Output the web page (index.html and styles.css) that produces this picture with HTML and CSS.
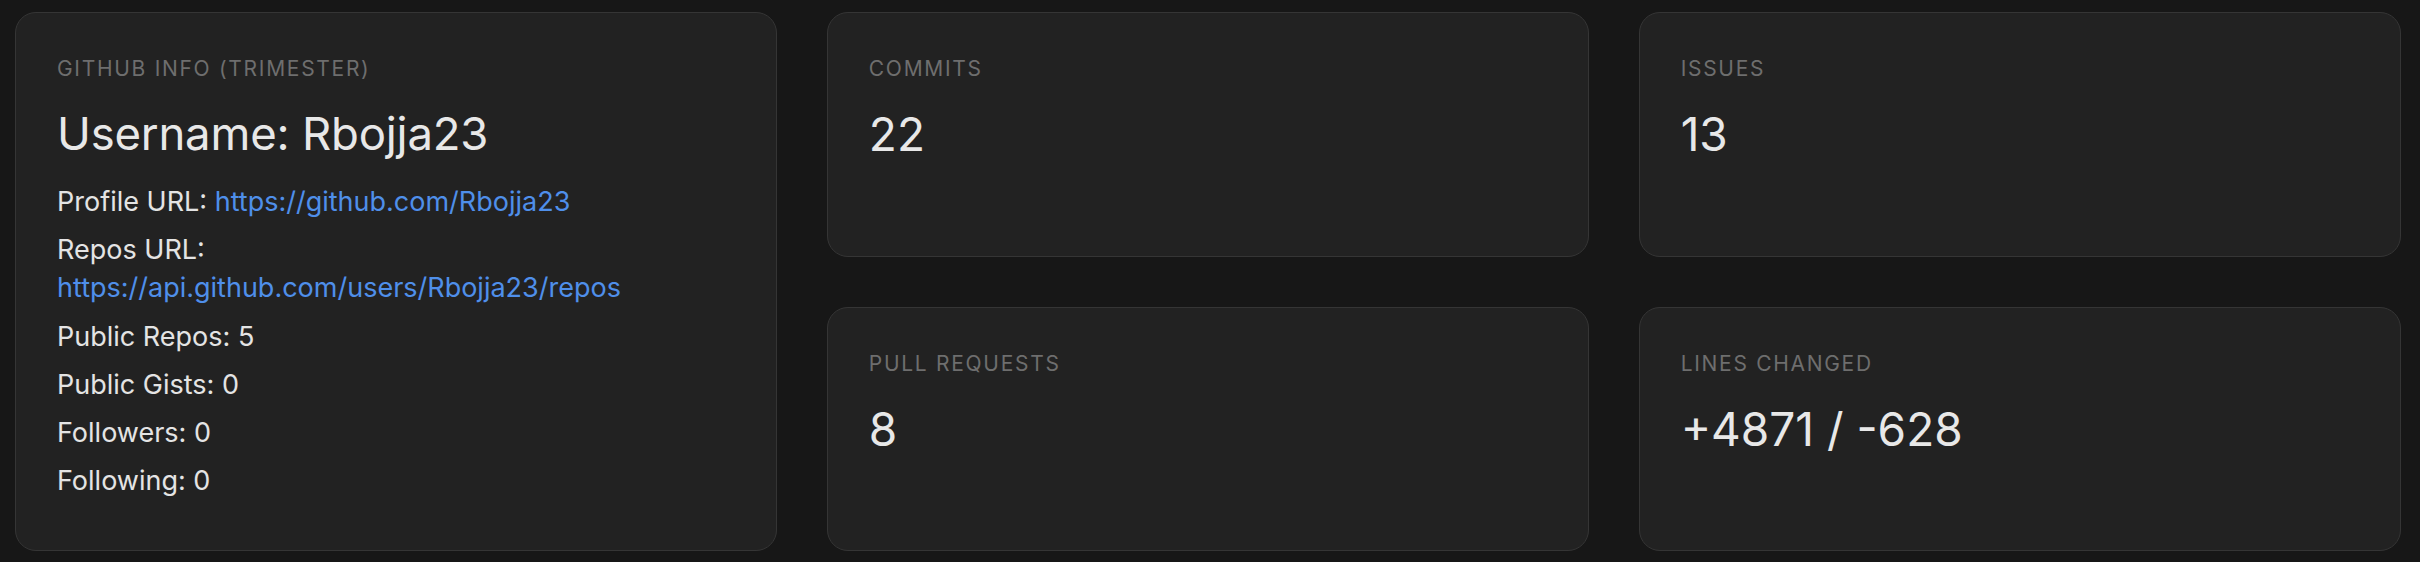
FILE: index.html
```html
<!DOCTYPE html>
<html lang="en">
<head>
<meta charset="utf-8">
<title>GitHub Stats</title>
<link rel="stylesheet" href="styles.css">
</head>
<body>
<main class="dashboard">
  <section class="card card-info">
    <div class="card-label">GitHub Info (Trimester)</div>
    <h2 class="username">Username: Rbojja23</h2>
    <p class="info-line">Profile URL: <a class="link" href="#">https://github.com/Rbojja23</a></p>
    <p class="info-line">Repos URL:<br><a class="link" href="#">https://api.github.com/users/Rbojja23/repos</a></p>
    <p class="info-line">Public Repos: 5</p>
    <p class="info-line">Public Gists: 0</p>
    <p class="info-line">Followers: 0</p>
    <p class="info-line">Following: 0</p>
  </section>
  <section class="card">
    <div class="card-label">Commits</div>
    <div class="card-value">22</div>
  </section>
  <section class="card">
    <div class="card-label">Issues</div>
    <div class="card-value">13</div>
  </section>
  <section class="card">
    <div class="card-label">Pull Requests</div>
    <div class="card-value">8</div>
  </section>
  <section class="card">
    <div class="card-label">Lines Changed</div>
    <div class="card-value">+4871 / -628</div>
  </section>
</main>
</body>
</html>
```
FILE: styles.css
```css
* { box-sizing: border-box; }

html, body {
  margin: 0;
  padding: 0;
  height: 100%;
  background: #171717;
  font-family: Inter, "Noto Sans", "Liberation Sans", sans-serif;
  color: #e6e6e6;
}

.dashboard {
  height: 562px;
  display: grid;
  grid-template-columns: repeat(3, 1fr);
  grid-template-rows: 1fr 1fr;
  column-gap: 49.5px;
  row-gap: 50px;
  padding: 12px 19px 11px 15px;
}

.card {
  background: #222222;
  border: 1.5px solid #353535;
  border-radius: 21px;
  padding: 41px 41px;
  min-width: 0;
}

.card-info {
  grid-row: 1 / span 2;
}

.card-label {
  font-size: 21px;
  line-height: 30px;
  text-transform: uppercase;
  letter-spacing: 1.7px;
  color: #6e6e6e;
}

.username {
  margin: 21.9px 0 0;
  font-size: 45.5px;
  line-height: 56.4px;
  font-weight: 400;
  letter-spacing: -0.2px;
  color: #e8e8e8;
}

.info-line {
  margin: 0 0 10px;
  font-size: 27px;
  line-height: 38.3px;
  color: #e4e4e4;
}

.username + .info-line {
  margin-top: 20.4px;
}

.link {
  color: #4f8fea;
  text-decoration: none;
}

.card-value {
  margin-top: 22.4px;
  font-size: 46px;
  line-height: 56px;
  color: #e8e8e8;
}
```
